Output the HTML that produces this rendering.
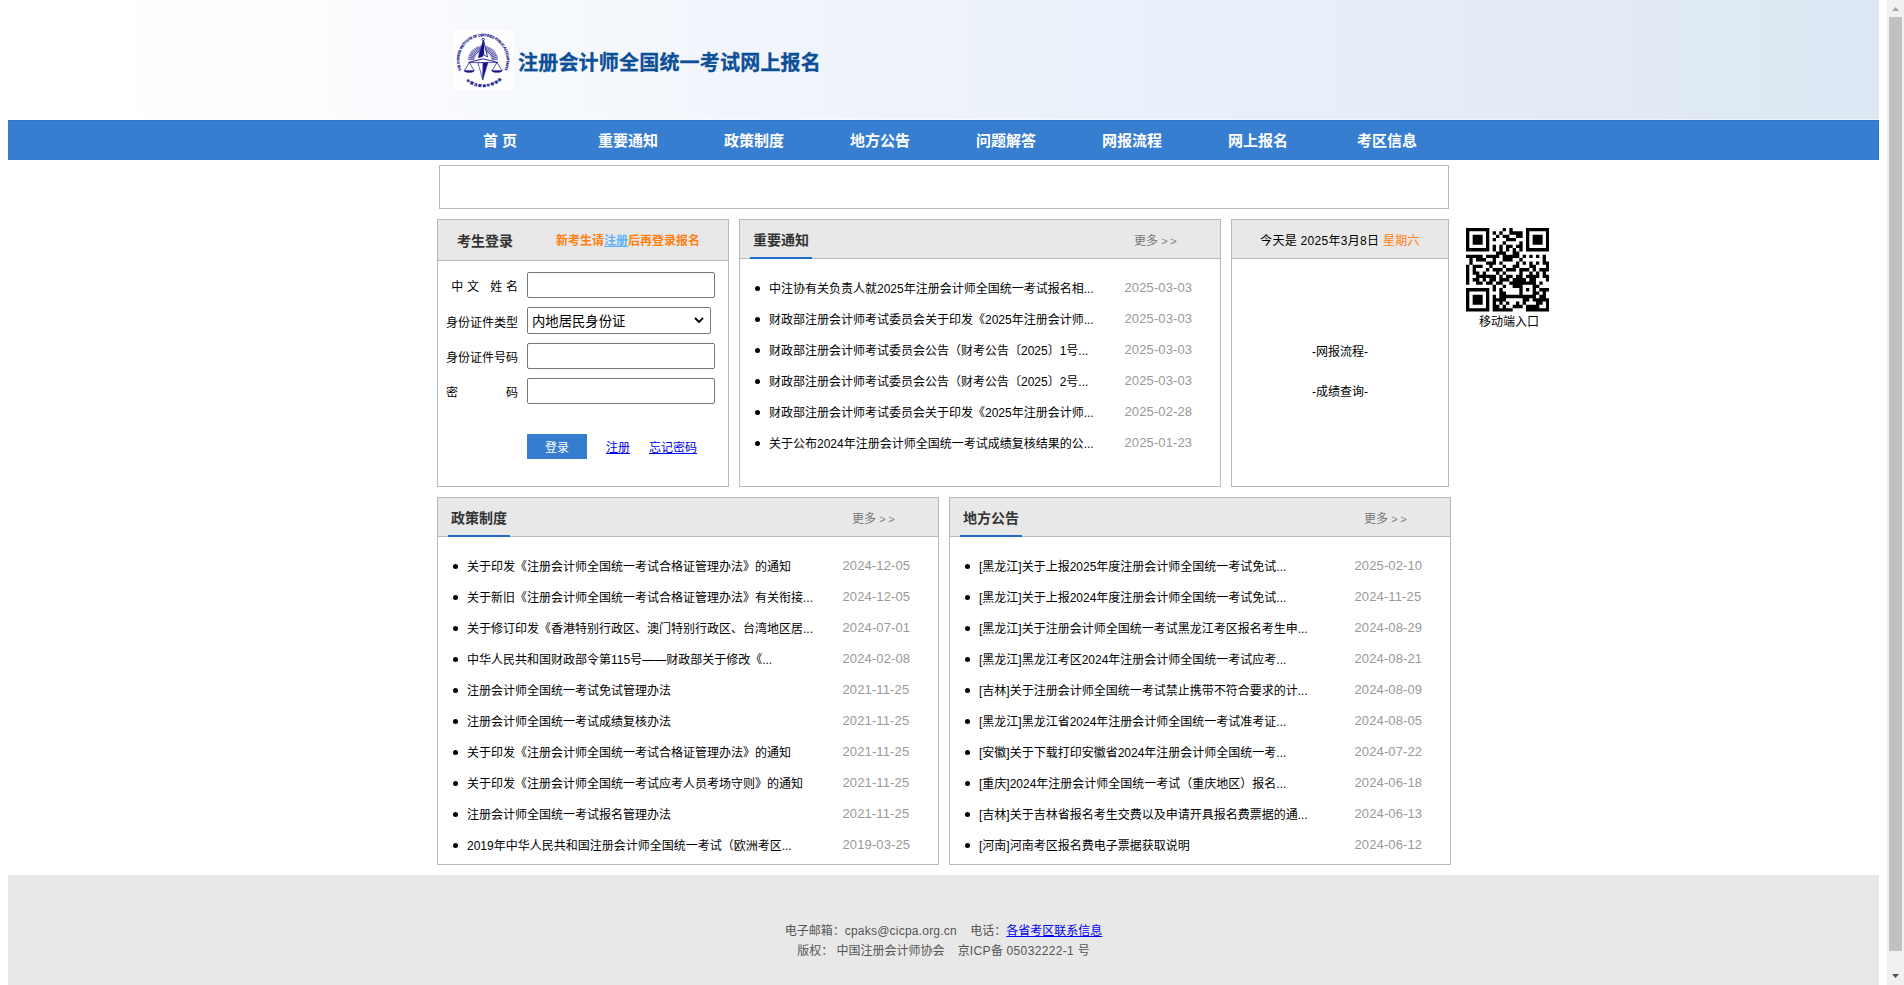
<!DOCTYPE html>
<html lang="zh-CN">
<head>
<meta charset="utf-8">
<title>注册会计师全国统一考试网上报名</title>
<style>
*{box-sizing:border-box;}
html,body{margin:0;padding:0;background:#fff;}
body{width:1904px;height:985px;overflow:hidden;position:relative;
  font-family:"Liberation Sans","Noto Sans CJK SC",sans-serif;font-size:12px;color:#000;}
a{color:#0000ee;}
.abs{position:absolute;}
#hdr{left:8px;top:0;width:1871px;height:120px;
  background:linear-gradient(90deg,#ffffff 0%,#fdfeff 12%,#f8fafd 24%,#eef3fb 48%,#e8eff9 69%,#e3ebf6 82%,#dce8f4 100%);border-bottom:1px solid rgba(255,255,255,.45);}
#logo{left:454px;top:30px;}
#sitetitle{left:518px;top:47px;height:32px;line-height:32px;font-size:20px;font-weight:bold;color:#0d4f96;-webkit-text-stroke:.3px #0d4f96;white-space:nowrap;letter-spacing:.2px;}
#nav{left:8px;top:120px;width:1871px;height:40px;background:#377ed0;border-top:1px solid #2c74cd;border-right:1px solid #2c74cd;}
#nav a{position:absolute;top:0;width:126px;height:39px;line-height:39px;text-align:center;color:#fff;font-weight:bold;font-size:15px;text-decoration:none;white-space:nowrap;}
#mq{left:439px;top:165px;width:1010px;height:44px;border:1px solid #b9b9b9;background:#fff;}
.panel{border:1px solid #b9b9b9;background:#fff;}
.ph{position:absolute;left:0;top:0;right:0;height:39px;background:#e8e8e8;border-bottom:1px solid #b9b9b9;}
.pt{position:absolute;left:10px;top:0;width:62px;height:39px;line-height:40px;text-align:center;font-size:14px;font-weight:bold;color:#333;border-bottom:2px solid #1f6dcb;white-space:nowrap;}
.more{position:absolute;top:2px;height:38px;line-height:39px;color:#777;font-size:12px;white-space:nowrap;text-decoration:none;}
ul.lst{position:absolute;margin:0;padding:0;list-style:none;left:0;right:0;}
ul.lst li{position:relative;height:31px;line-height:31px;white-space:nowrap;font-size:12px;}
ul.lst li:before{content:"";position:absolute;left:15px;top:15px;width:5px;height:5px;border-radius:50%;background:#000;}
ul.lst li a{position:absolute;left:29px;top:3px;color:#000;text-decoration:none;}
ul.lst li span{position:absolute;top:1px;margin-left:-.5px;color:#999;font-size:13px;letter-spacing:.12px;}
#foot{left:8px;top:875px;width:1871px;height:128px;background:#e8e8e8;color:#555;font-size:13px;text-align:center;}
#sb{left:1887px;top:0;width:17px;height:985px;background:#f1f1f1;}
#sb .th{position:absolute;left:2px;top:17px;width:13px;height:934px;background:#c1c1c1;}

#qrl{left:1467px;top:314px;width:84px;height:16px;line-height:16px;text-align:center;font-size:12px;color:#000;white-space:nowrap;}
#login .ph{height:41px;}
#login .lt{position:absolute;left:19px;top:0;height:40px;line-height:42px;font-size:14px;font-weight:bold;color:#333;white-space:nowrap;}
#login .tip{position:absolute;left:118px;top:0;height:40px;line-height:42px;font-size:12px;font-weight:bold;color:#ff7f0e;white-space:nowrap;}
#login .tip a{color:#5fb2ff;text-decoration:underline;}
.lab{position:absolute;left:8px;width:72px;height:20px;line-height:24px;font-size:12px;color:#000;white-space:nowrap;text-align:right;}
.inp{position:absolute;left:89px;width:188px;height:26px;border:1px solid #767676;border-radius:2px;background:#fff;}
.sel{position:absolute;left:89px;width:184px;height:27px;border:1px solid #767676;border-radius:2px;background:#fff;font-size:13.33px;line-height:27px;padding-left:4px;color:#000;white-space:nowrap;}
.btn{position:absolute;left:89px;top:214px;width:60px;height:25px;line-height:28px;text-align:center;background:#377dcf;color:#fff;font-size:12px;}
.lk{position:absolute;top:214px;height:25px;line-height:28px;font-size:12px;color:#0000ee;text-decoration:underline;white-space:nowrap;}
#today .dt{position:absolute;left:0;right:0;top:0;height:38px;line-height:42px;text-align:center;font-size:12px;color:#000;white-space:nowrap;letter-spacing:.3px;}
#today .dt b{font-weight:normal;color:#ff7f0e;}
#today .ln{position:absolute;left:0;right:0;height:20px;line-height:23px;text-align:center;font-size:12px;color:#000;}
#foot p{margin:0;position:absolute;left:0;right:0;height:20px;line-height:21px;font-size:12px;color:#555;white-space:pre;}
.more i{font-style:normal;letter-spacing:2.5px;font-size:11px;color:#808080;}
</style>
</head>
<body>
<div id="hdr" class="abs"></div>
<svg id="logo" class="abs" width="60" height="60" viewBox="0 0 60 60">
<rect width="60" height="60" fill="#fff" fill-opacity=".82"/>
<defs><path id="arcT" d="M7.6 40.2A23.7 23.7 0 1 1 50.5 39.9"/><path id="arcB" d="M12.2 51.1A27 27 0 0 0 47.6 49.5"/></defs>
<g fill="#1b198d" stroke="#1b198d" stroke-width=".22" font-family="'Liberation Sans','Noto Sans CJK SC',sans-serif" font-weight="bold">
<text font-size="3.5" textLength="95" lengthAdjust="spacingAndGlyphs"><textPath href="#arcT">THE CHINESE INSTITUTE OF CERTIFIED PUBLIC ACCOUNTANTS</textPath></text>
<text font-size="3.4" textLength="38.5" lengthAdjust="spacing"><textPath href="#arcB">中国注册会计师协会</textPath></text>
</g>
<path d="M14.06 29.3A15 15 0 0 1 43.94 29.3L37.77 29.83A8.8 8.8 0 0 0 20.23 29.83z" fill="#23218f" fill-opacity=".3"/>
<path d="M20.23 29.83L14.06 29.29M20.44 28.55L14.41 27.10M20.84 27.30L15.09 24.98M21.42 26.13L16.08 22.99M22.16 25.06L17.34 21.16M23.05 24.11L18.87 19.54M24.08 23.30L20.61 18.16M25.21 22.66L22.54 17.06M26.43 22.18L24.61 16.26M27.70 21.90L26.78 15.76M29.00 21.80L29.00 15.60M30.30 21.90L31.22 15.76M31.57 22.18L33.39 16.26M32.79 22.66L35.46 17.06M33.92 23.30L37.39 18.16M34.95 24.11L39.13 19.54M35.84 25.06L40.66 21.16M36.58 26.13L41.92 22.99M37.16 27.30L42.91 24.98M37.56 28.55L43.59 27.10M37.77 29.83L43.94 29.29" stroke="#23218f" stroke-width=".8" stroke-opacity=".8" fill="none"/>
<path d="M14.6 32.3L29.2 28.6L43.8 32.3z" fill="#fff"/>
<g fill="#14128a" stroke="#14128a" stroke-linejoin="round">
<circle cx="29.2" cy="9.5" r="1.15" fill="#fff" stroke-width=".9"/>
<path d="M29.7 11.2L33.5 26.9L29.6 24.8z" fill="#fff" stroke-width=".85"/>
<path d="M28.9 11.2L24.3 27.6L28.2 26.8L29.6 24.6L29.5 11.2z" stroke-width=".6"/>
<path d="M14.6 32.4L29.2 28.9L43.8 32.4" fill="none" stroke-width=".95"/>
<path d="M14.8 32.6H43.6" fill="none" stroke-width=".7"/>
<path d="M23.9 32.7L28.8 49.6L29.2 32.7z" fill="#fff" stroke-width=".65"/>
<path d="M29.2 32.7L28.8 49.6L33.9 32.7z" stroke-width=".5"/>
<path d="M15.3 32.5L10.3 40.8M15.3 32.5L20.2 40.8M43 32.5L38 40.8M43 32.5L48 40.8" fill="none" stroke-width=".7"/>
<path d="M9.8 40.4H20.5Q19.6 42.5 15.15 42.5Q10.7 42.5 9.8 40.4zM37.5 40.4H48.4Q47.5 42.5 42.95 42.5Q38.4 42.5 37.5 40.4z" stroke-width=".35"/>
</g>
</svg>
<div id="sitetitle" class="abs">注册会计师全国统一考试网上报名</div>

<div id="nav" class="abs">
<a style="left:429px">首 页</a>
<a style="left:557px">重要通知</a>
<a style="left:683px">政策制度</a>
<a style="left:809px">地方公告</a>
<a style="left:935px">问题解答</a>
<a style="left:1061px">网报流程</a>
<a style="left:1187px">网上报名</a>
<a style="left:1316px">考区信息</a>
</div>

<div id="mq" class="abs"></div>

<!-- login -->
<div id="login" class="abs panel" style="left:437px;top:219px;width:292px;height:268px;">
<div class="ph"><div class="lt">考生登录</div><div class="tip">新考生请<a>注册</a>后再登录报名</div></div>
<div class="lab" style="top:55px;word-spacing:.42px">中&nbsp;文&nbsp;&nbsp;&nbsp;姓&nbsp;名</div>
<div class="inp" style="top:52px"></div>
<div class="lab" style="top:91px">身份证件类型</div>
<div class="sel" style="top:87px">内地居民身份证<svg style="position:absolute;right:6px;top:9px" width="10" height="7" viewBox="0 0 10 7"><path d="M1 1l4 4 4-4" fill="none" stroke="#000" stroke-width="1.8"/></svg></div>
<div class="lab" style="top:126px">身份证件号码</div>
<div class="inp" style="top:123px"></div>
<div class="lab" style="top:161px;text-align:left">密</div><div class="lab" style="top:161px">码</div>
<div class="inp" style="top:158px"></div>
<div class="btn">登录</div>
<a class="lk" style="left:168px">注册</a>
<a class="lk" style="left:211px">忘记密码</a>
</div>

<!-- notice -->
<div id="notice" class="abs panel" style="left:739px;top:219px;width:482px;height:268px;">
<div class="ph"><div class="pt">重要通知</div><a class="more" style="left:394px">更多 <i>&gt;&gt;</i></a></div>
<!--NOTICE-->
<ul class="lst" style="top:51px">
<li><a>中注协有关负责人就2025年注册会计师全国统一考试报名相...</a><span style="left:385px">2025-03-03</span></li>
<li><a>财政部注册会计师考试委员会关于印发《2025年注册会计师...</a><span style="left:385px">2025-03-03</span></li>
<li><a>财政部注册会计师考试委员会公告（财考公告〔2025〕1号...</a><span style="left:385px">2025-03-03</span></li>
<li><a>财政部注册会计师考试委员会公告（财考公告〔2025〕2号...</a><span style="left:385px">2025-03-03</span></li>
<li><a>财政部注册会计师考试委员会关于印发《2025年注册会计师...</a><span style="left:385px">2025-02-28</span></li>
<li><a>关于公布2024年注册会计师全国统一考试成绩复核结果的公...</a><span style="left:385px">2025-01-23</span></li>
</ul>
<!--/NOTICE-->
</div>

<!-- right -->
<div id="today" class="abs panel" style="left:1231px;top:219px;width:218px;height:268px;">
<div class="ph"><div class="dt">今天是 2025年3月8日 <b>星期六</b></div></div>
<div class="ln" style="top:121px">-网报流程-</div>
<div class="ln" style="top:161px">-成绩查询-</div>
</div>

<!-- policy -->
<div id="policy" class="abs panel" style="left:437px;top:497px;width:502px;height:368px;">
<div class="ph"><div class="pt">政策制度</div><a class="more" style="left:414px">更多 <i>&gt;&gt;</i></a></div>
<!--POLICY-->
<ul class="lst" style="top:51px">
<li><a>关于印发《注册会计师全国统一考试合格证管理办法》的通知</a><span style="left:405px">2024-12-05</span></li>
<li><a>关于新旧《注册会计师全国统一考试合格证管理办法》有关衔接...</a><span style="left:405px">2024-12-05</span></li>
<li><a>关于修订印发《香港特别行政区、澳门特别行政区、台湾地区居...</a><span style="left:405px">2024-07-01</span></li>
<li><a>中华人民共和国财政部令第115号——财政部关于修改《...</a><span style="left:405px">2024-02-08</span></li>
<li><a>注册会计师全国统一考试免试管理办法</a><span style="left:405px">2021-11-25</span></li>
<li><a>注册会计师全国统一考试成绩复核办法</a><span style="left:405px">2021-11-25</span></li>
<li><a>关于印发《注册会计师全国统一考试合格证管理办法》的通知</a><span style="left:405px">2021-11-25</span></li>
<li><a>关于印发《注册会计师全国统一考试应考人员考场守则》的通知</a><span style="left:405px">2021-11-25</span></li>
<li><a>注册会计师全国统一考试报名管理办法</a><span style="left:405px">2021-11-25</span></li>
<li><a>2019年中华人民共和国注册会计师全国统一考试（欧洲考区...</a><span style="left:405px">2019-03-25</span></li>
</ul>
<!--/POLICY-->
</div>

<!-- local -->
<div id="local" class="abs panel" style="left:949px;top:497px;width:502px;height:368px;">
<div class="ph"><div class="pt">地方公告</div><a class="more" style="left:414px">更多 <i>&gt;&gt;</i></a></div>
<!--LOCAL-->
<ul class="lst" style="top:51px">
<li><a>[黑龙江]关于上报2025年度注册会计师全国统一考试免试...</a><span style="left:405px">2025-02-10</span></li>
<li><a>[黑龙江]关于上报2024年度注册会计师全国统一考试免试...</a><span style="left:405px">2024-11-25</span></li>
<li><a>[黑龙江]关于注册会计师全国统一考试黑龙江考区报名考生申...</a><span style="left:405px">2024-08-29</span></li>
<li><a>[黑龙江]黑龙江考区2024年注册会计师全国统一考试应考...</a><span style="left:405px">2024-08-21</span></li>
<li><a>[吉林]关于注册会计师全国统一考试禁止携带不符合要求的计...</a><span style="left:405px">2024-08-09</span></li>
<li><a>[黑龙江]黑龙江省2024年注册会计师全国统一考试准考证...</a><span style="left:405px">2024-08-05</span></li>
<li><a>[安徽]关于下载打印安徽省2024年注册会计师全国统一考...</a><span style="left:405px">2024-07-22</span></li>
<li><a>[重庆]2024年注册会计师全国统一考试（重庆地区）报名...</a><span style="left:405px">2024-06-18</span></li>
<li><a>[吉林]关于吉林省报名考生交费以及申请开具报名费票据的通...</a><span style="left:405px">2024-06-13</span></li>
<li><a>[河南]河南考区报名费电子票据获取说明</a><span style="left:405px">2024-06-12</span></li>
</ul>
<!--/LOCAL-->
</div>

<!--QR-->
<svg class="abs" style="left:1466px;top:228.2px" width="83.3" height="83.5" viewBox="0 0 25 25" preserveAspectRatio="none"><path fill="#000" d="M0 0h7v1h-7zM11 0h1v1h-1zM13 0h1v1h-1zM18 0h7v1h-7zM0 1h1v1h-1zM6 1h1v1h-1zM8 1h1v1h-1zM10 1h1v1h-1zM13 1h4v1h-4zM18 1h1v1h-1zM24 1h1v1h-1zM0 2h1v1h-1zM2 2h3v1h-3zM6 2h1v1h-1zM9 2h1v1h-1zM11 2h2v1h-2zM15 2h2v1h-2zM18 2h1v1h-1zM20 2h3v1h-3zM24 2h1v1h-1zM0 3h1v1h-1zM2 3h3v1h-3zM6 3h1v1h-1zM8 3h1v1h-1zM12 3h3v1h-3zM18 3h1v1h-1zM20 3h3v1h-3zM24 3h1v1h-1zM0 4h1v1h-1zM2 4h3v1h-3zM6 4h1v1h-1zM11 4h1v1h-1zM16 4h1v1h-1zM18 4h1v1h-1zM20 4h3v1h-3zM24 4h1v1h-1zM0 5h1v1h-1zM6 5h1v1h-1zM8 5h1v1h-1zM10 5h1v1h-1zM12 5h2v1h-2zM15 5h2v1h-2zM18 5h1v1h-1zM24 5h1v1h-1zM0 6h7v1h-7zM8 6h1v1h-1zM10 6h1v1h-1zM12 6h1v1h-1zM14 6h1v1h-1zM16 6h1v1h-1zM18 6h7v1h-7zM9 7h3v1h-3zM14 7h2v1h-2zM0 8h5v1h-5zM6 8h4v1h-4zM11 8h5v1h-5zM17 8h1v1h-1zM19 8h1v1h-1zM21 8h1v1h-1zM23 8h1v1h-1zM1 9h1v1h-1zM3 9h3v1h-3zM8 9h1v1h-1zM11 9h3v1h-3zM16 9h1v1h-1zM23 9h1v1h-1zM1 10h1v1h-1zM6 10h3v1h-3zM10 10h1v1h-1zM15 10h1v1h-1zM17 10h1v1h-1zM19 10h1v1h-1zM21 10h1v1h-1zM23 10h2v1h-2zM0 11h1v1h-1zM2 11h3v1h-3zM7 11h1v1h-1zM11 11h1v1h-1zM14 11h2v1h-2zM19 11h2v1h-2zM24 11h1v1h-1zM0 12h1v1h-1zM2 12h1v1h-1zM6 12h1v1h-1zM8 12h3v1h-3zM12 12h3v1h-3zM16 12h3v1h-3zM20 12h1v1h-1zM22 12h3v1h-3zM0 13h1v1h-1zM2 13h2v1h-2zM5 13h1v1h-1zM9 13h1v1h-1zM11 13h1v1h-1zM16 13h1v1h-1zM19 13h1v1h-1zM21 13h1v1h-1zM23 13h1v1h-1zM0 14h1v1h-1zM3 14h6v1h-6zM10 14h1v1h-1zM12 14h2v1h-2zM15 14h2v1h-2zM18 14h4v1h-4zM23 14h2v1h-2zM0 15h1v1h-1zM2 15h2v1h-2zM5 15h1v1h-1zM7 15h2v1h-2zM10 15h3v1h-3zM14 15h4v1h-4zM19 15h2v1h-2zM24 15h1v1h-1zM0 16h1v1h-1zM3 16h2v1h-2zM6 16h2v1h-2zM9 16h2v1h-2zM13 16h8v1h-8zM22 16h1v1h-1zM8 17h1v1h-1zM11 17h1v1h-1zM14 17h3v1h-3zM20 17h2v1h-2zM0 18h7v1h-7zM8 18h1v1h-1zM10 18h1v1h-1zM16 18h1v1h-1zM18 18h1v1h-1zM20 18h1v1h-1zM22 18h3v1h-3zM0 19h1v1h-1zM6 19h1v1h-1zM10 19h2v1h-2zM16 19h1v1h-1zM20 19h2v1h-2zM23 19h1v1h-1zM0 20h1v1h-1zM2 20h3v1h-3zM6 20h1v1h-1zM8 20h1v1h-1zM10 20h11v1h-11zM22 20h2v1h-2zM0 21h1v1h-1zM2 21h3v1h-3zM6 21h1v1h-1zM8 21h4v1h-4zM17 21h2v1h-2zM20 21h5v1h-5zM0 22h1v1h-1zM2 22h3v1h-3zM6 22h1v1h-1zM8 22h1v1h-1zM10 22h1v1h-1zM12 22h1v1h-1zM15 22h1v1h-1zM17 22h1v1h-1zM21 22h2v1h-2zM24 22h1v1h-1zM0 23h1v1h-1zM6 23h1v1h-1zM8 23h2v1h-2zM11 23h1v1h-1zM14 23h3v1h-3zM18 23h4v1h-4zM24 23h1v1h-1zM0 24h7v1h-7zM8 24h6v1h-6zM18 24h7v1h-7z"/></svg>
<!--/QR-->
<div id="qrl" class="abs">移动端入口</div>

<div id="foot" class="abs">
<p style="top:46px;text-align:center">电子邮箱：<span style="letter-spacing:.22px">cpaks@cicpa.org.cn</span>    电话：<a style="text-decoration:underline">各省考区联系信息</a></p>
<p style="top:66px;text-align:center">版权： 中国注册会计师协会    京<span style="letter-spacing:.35px">ICP</span>备<span style="letter-spacing:.35px"> 05032222-1 </span>号</p>
</div>

<div id="sb" class="abs"><div class="th"></div><svg style="position:absolute;left:0;top:0" width="17" height="985"><path d="M5 11h7l-3.5-4z" fill="#a3a3a3"/><path d="M5 974h7l-3.5 4z" fill="#505050"/></svg></div>
</body>
</html>
